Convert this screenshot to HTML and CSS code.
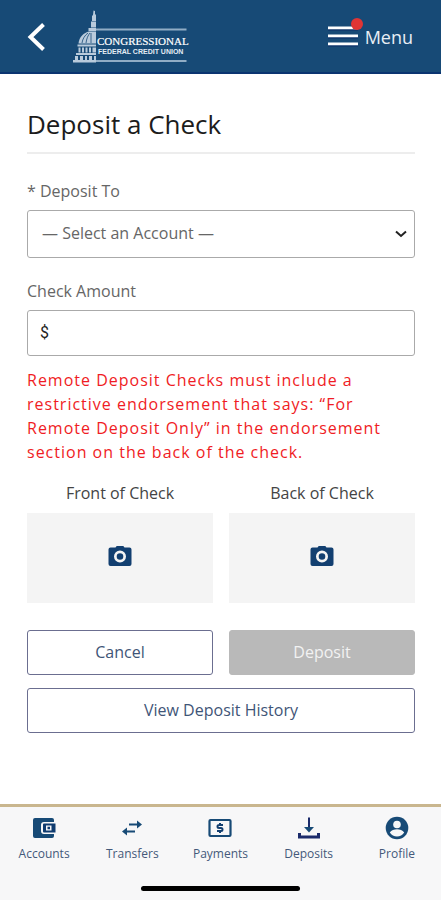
FILE: index.html
```html
<!DOCTYPE html>
<html lang="en">
<head>
<meta charset="utf-8">
<meta name="viewport" content="width=device-width, initial-scale=1">
<title>Deposit a Check</title>
<link rel="stylesheet" href="styles.css">
</head>
<body>
<header class="topbar">
  <button class="back" type="button" aria-label="Back">
    <svg width="20" height="32" viewBox="0 0 20 32"><path d="M16.500 3.500L3.500 16L16.500 28.500" fill="none" stroke="#fff" stroke-width="4"/></svg>
  </button>
  <a class="logo" href="#">
    <svg width="120" height="54" viewBox="72 11 120 54">
      <g fill="#b9cbdc">
        <path d="M93.500 11.500L95 12v3l1 1v6h-4v-5l1-1z"/>
        <path d="M91 22.500h5v6h-5zM88.500 29h7.500v3h-7.500z"/>
        <path d="M96 32.500v12H78.500C79 38 84 33.500 89 32.500z"/>
        <path d="M77.500 45.500H96v2H77.500zM78.500 48.500h2v5h-2zM82 48.500h2v5h-2zM85.500 48.500h2v5h-2zM89 48.500h2v5h-2zM92.500 48.500H96v5h-3.500zM76 54h20v2H76zM75 57h3v4h-3zM80 57h3v4h-3zM85 57h2v4h-2zM89 57h3v4h-3zM94 57h2v4h-2z"/>
        <path d="M73 61h23v2.500H73z"/>
      </g>
      <path d="M82 44c.5-4 3-8 6-10M86 44c.5-4 2-8 4-10M91 44V34" fill="none" stroke="#174a76" stroke-width=".8"/>
      <path d="M96 30.500h90.500M96 62h90.500" stroke="#91adc5" stroke-width="2"/>
      <text class="logo-name" x="97" y="46">CONGRESSIONAL</text>
      <text class="logo-sub" x="98" y="55">FEDERAL CREDIT UNION</text>
    </svg>
  </a>
  <button class="menu" type="button">
    <span class="burger">
      <svg width="30" height="22" viewBox="0 0 30 22"><path d="M0 2h30M0 10h30M0 18h30" stroke="#fff" stroke-width="3"/><path d="M0 4h30M0 12h30M0 20h30" stroke="#0c2c66" stroke-width="1"/></svg>
      <span class="dot"></span>
    </span>
    Menu
  </button>
</header>

<main class="content">
  <h1>Deposit a Check</h1>
  <form class="form">
    <label for="account">* Deposit To</label>
    <div class="field select-field">
      <select id="account"><option>— Select an Account —</option></select>
      <svg class="chevron" width="12" height="8" viewBox="0 0 12 8"><path d="M1 1.500l5 4.500 5-4.500" fill="none" stroke="#222" stroke-width="2"/></svg>
    </div>
    <label for="amount">Check Amount</label>
    <div class="field amount-field">
      <span class="currency">$</span>
      <input id="amount" type="text" inputmode="decimal">
    </div>
    <p class="notice">Remote Deposit Checks must include a restrictive endorsement that says: “For Remote Deposit Only” in the endorsement section on the back of the check.</p>
    <div class="pair captures">
      <div class="capture">
        <span id="front">Front of Check</span>
        <button type="button" aria-labelledby="front">
          <svg width="24" height="24" viewBox="0 0 24 24"><path fill-rule="evenodd" fill="#123f70" d="M7.500 3.500l1.200-1.500h6.600l1.200 1.500H21.500a2 2 0 0 1 2 2V20a2 2 0 0 1-2 2h-19a2 2 0 0 1-2-2V5.500a2 2 0 0 1 2-2zM12 6.500a6 6 0 1 0 0 12 6 6 0 0 0 0-12zM12 9.200a3.300 3.300 0 1 1 0 6.600 3.300 3.300 0 0 1 0-6.600z"/></svg>
        </button>
      </div>
      <div class="capture">
        <span id="rear">Back of Check</span>
        <button type="button" aria-labelledby="rear">
          <svg width="24" height="24" viewBox="0 0 24 24"><path fill-rule="evenodd" fill="#123f70" d="M7.500 3.500l1.200-1.500h6.600l1.200 1.500H21.500a2 2 0 0 1 2 2V20a2 2 0 0 1-2 2h-19a2 2 0 0 1-2-2V5.500a2 2 0 0 1 2-2zM12 6.500a6 6 0 1 0 0 12 6 6 0 0 0 0-12zM12 9.200a3.300 3.300 0 1 1 0 6.600 3.300 3.300 0 0 1 0-6.600z"/></svg>
        </button>
      </div>
    </div>
    <div class="pair actions">
      <button class="btn" type="button">Cancel</button>
      <button class="btn primary" type="submit" disabled>Deposit</button>
      <button class="btn wide" type="button">View Deposit History</button>
    </div>
  </form>
</main>

<footer class="tabbar">
  <nav class="tabs">
    <a href="#">
      <svg width="24" height="24" viewBox="0 0 24 24"><path fill="#174a76" d="M3 2h17a2 2 0 0 1 2 2v2H12a3 3 0 0 0-3 3v6a3 3 0 0 0 3 3h10v2a2 2 0 0 1-2 2H3a2 2 0 0 1-2-2V4a2 2 0 0 1 2-2z"/><path fill="#103c70" fill-rule="evenodd" d="M12 7.500h11.500v9H12a1 1 0 0 1-1-1v-7a1 1 0 0 1 1-1zM14 9.500v5H19.500v-5zM15.500 10.800h2.500v2.500h-2.500z"/></svg>
      Accounts
    </a>
    <a href="#">
      <svg width="24" height="24" viewBox="0 0 24 24"><path d="M9 8.500h9M6 15.500h9" stroke="#174a76" stroke-width="2.200"/><path fill="#174a76" d="M17 4.500l5 4-5 4zM7 11.500l-5 4 5 4z"/></svg>
      Transfers
    </a>
    <a href="#">
      <svg width="24" height="24" viewBox="0 0 24 24"><rect x="1.500" y="4" width="21" height="16" rx="1" fill="none" stroke="#174a76" stroke-width="2.200"/><path d="M15 9H11q-1.500 0-1.500 1.500T11 12h2q1.500 0 1.500 1.500T13 15H9M12 7v2M12 15v2" fill="none" stroke="#123f70" stroke-width="2"/></svg>
      Payments
    </a>
    <a href="#">
      <svg width="24" height="24" viewBox="0 0 24 24"><path d="M12 1.500v12" stroke="#1b2b6b" stroke-width="2"/><path fill="#174a76" d="M7 11h10l-5 5.500z"/><path d="M2.500 17v4h19v-4" fill="none" stroke="#1b2b6b" stroke-width="3"/></svg>
      Deposits
    </a>
    <a href="#">
      <svg width="24" height="24" viewBox="0 0 24 24"><circle cx="12" cy="12" r="11.300" fill="#174a76"/><circle cx="12" cy="8.500" r="3.800" fill="#f7f7f8"/><path fill="#f7f7f8" d="M4.800 16.500c1.500-2.500 4.500-3.300 7.200-3.300s5.700.8 7.200 3.300c-1.700 2.600-4.300 4-7.200 4s-5.500-1.400-7.200-4z"/></svg>
      Profile
    </a>
  </nav>
  <div class="home-indicator"></div>
</footer>
</body>
</html>
```
FILE: styles.css
```css
* {
  box-sizing: border-box;
}

body {
  margin: 0;
  min-height: 100vh;
  display: flex;
  flex-direction: column;
  background: #fff;
  color: #444;
  font: 16px/24px "Open Sans", "Noto Sans", sans-serif;
}

button,
input,
select {
  font: inherit;
  color: inherit;
}

svg {
  display: block;
}

.topbar {
  display: flex;
  align-items: center;
  height: 74px;
  padding: 0 28px 0 27px;
  background: #174a76;
  box-shadow: inset 0 -2px #0b3470;
}

.back,
.menu {
  padding: 0;
  border: 0;
  background: none;
}

.logo {
  margin-left: 25px;
}

.logo-name {
  font: 11px "Liberation Serif", serif;
  fill: #fff;
  stroke: #fff;
  stroke-width: 0.2px;
}

.logo-sub {
  font: bold 7px "Liberation Sans", sans-serif;
  fill: #e4ecf4;
}

.menu {
  display: flex;
  align-items: center;
  gap: 7px;
  margin-left: auto;
  color: #e8eef5;
  font-size: 18px;
}

.burger {
  position: relative;
}

.dot {
  position: absolute;
  top: -8px;
  right: -5px;
  width: 12px;
  height: 12px;
  border-radius: 50%;
  background: #df3535;
}

.content {
  flex: 1;
  padding: 32px 26px 24px 27px;
}

h1 {
  margin: 0 0 25px;
  padding-bottom: 10px;
  border-bottom: 2px solid #ededed;
  color: #1c1c1c;
  font-size: 26px;
  font-weight: 400;
  line-height: 36px;
}

.form {
  display: flex;
  flex-direction: column;
}

label {
  margin-bottom: 7px;
  color: #666;
}

.field {
  display: flex;
  align-items: center;
  border: 1px solid #aaa;
  border-radius: 3px;
}

.select-field {
  position: relative;
  height: 48px;
  margin-bottom: 21px;
}

.select-field select {
  width: 100%;
  height: 100%;
  padding: 0 32px 2px 14px;
  border: 0;
  background: none;
  appearance: none;
  color: #666;
}

.chevron {
  position: absolute;
  right: 7px;
  pointer-events: none;
}

.amount-field {
  height: 46px;
  padding-left: 12px;
  gap: 4px;
  color: #222;
}

.currency {
  font-family: Roboto, sans-serif;
}

.amount-field input {
  flex: 1;
  min-width: 0;
  height: 100%;
  padding: 0;
  border: 0;
  background: none;
}

.notice {
  margin: 12px 0 17px;
  color: #f01c24;
  letter-spacing: 1px;
}

.pair {
  display: grid;
  grid-template-columns: 1fr 1fr;
  gap: 13px 16px;
}

.capture {
  display: flex;
  flex-direction: column;
  gap: 8px;
  text-align: center;
}

.capture button {
  display: grid;
  place-items: center;
  height: 90px;
  padding: 0 0 4px;
  border: 0;
  background: #f4f4f4;
}

.actions {
  margin-top: 27px;
}

.btn {
  height: 45px;
  padding: 0 0 1px;
  border: 1px solid #6b6e90;
  border-radius: 3px;
  background: #fff;
  color: #3f5577;
}

.primary {
  border-color: #b9b9b9;
  background: #b9b9b9;
  color: #f2f2f2;
}

.wide {
  grid-column: 1 / -1;
}

.tabbar {
  display: flex;
  flex-direction: column;
  align-items: center;
  gap: 23px;
  padding: 9px 0;
  border-top: 3px solid #c9b68e;
  background: #f7f7f8;
}

.tabs {
  display: grid;
  grid-template-columns: repeat(5, 1fr);
  width: 100%;
}

.tabs a {
  display: flex;
  flex-direction: column;
  align-items: center;
  gap: 5px;
  color: #44597a;
  font-size: 12px;
  line-height: 18px;
  text-decoration: none;
}

.home-indicator {
  width: 36%;
  height: 5px;
  border-radius: 3px;
  background: #000;
}
```
